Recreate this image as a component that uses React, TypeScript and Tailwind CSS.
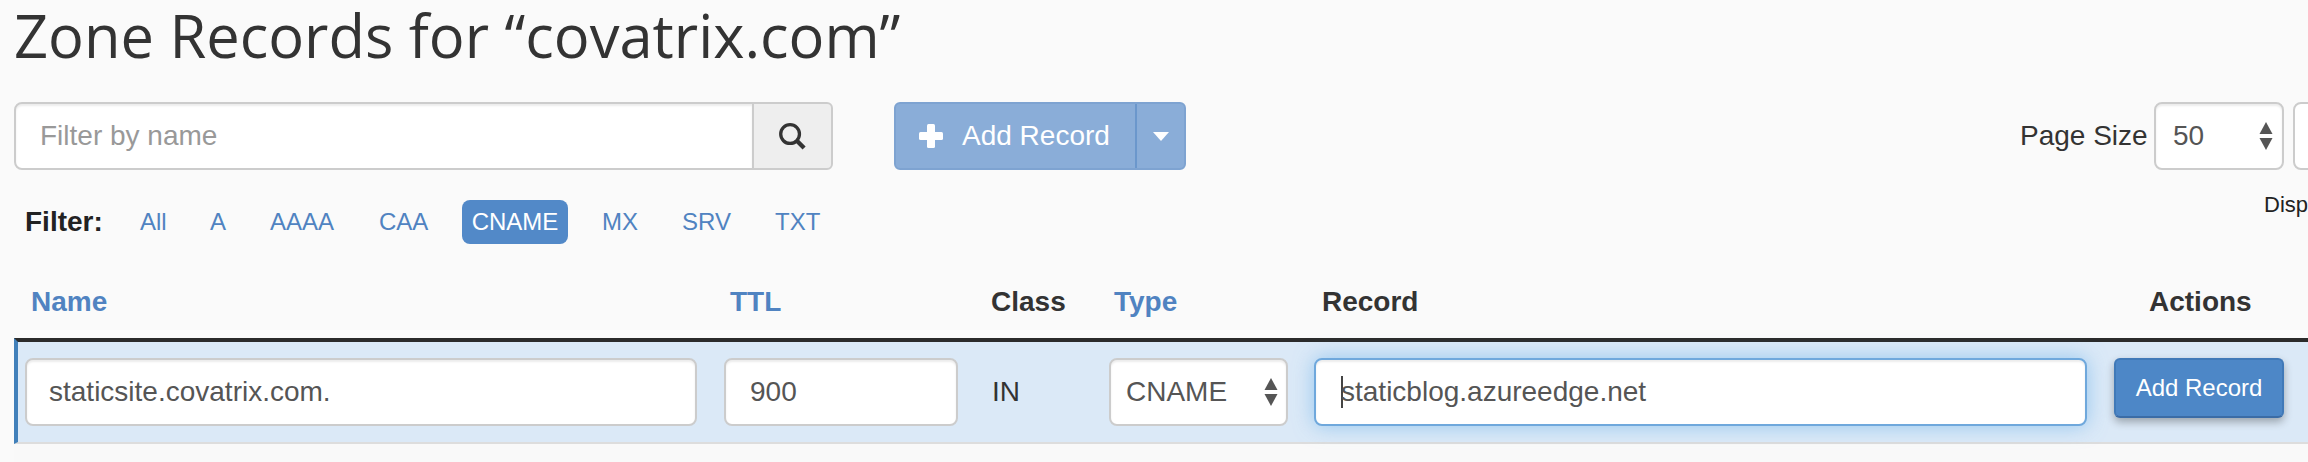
import React from "react";

function UpDown() {
  return (
    <svg width="14" height="28" viewBox="0 0 14 28" className="shrink-0" fill="#555">
      <path d="M7 0 L13.5 12 L0.5 12 Z" />
      <path d="M7 28 L13.5 16 L0.5 16 Z" />
    </svg>
  );
}

function Search() {
  return (
    <svg width="29" height="29" viewBox="0 0 30 30" fill="none" stroke="#333">
      <circle cx="12.5" cy="12.5" r="9.7" strokeWidth="3.4" />
      <path d="M19.5 19.5 L27 27" strokeWidth="4.4" />
    </svg>
  );
}

function Plus() {
  return (
    <svg width="26" height="26" viewBox="0 0 26 26" fill="#fff">
      <rect x="9" y="1" width="8" height="24" rx="1.5" />
      <rect x="1" y="9" width="24" height="8" rx="1.5" />
    </svg>
  );
}

const inputCls =
  "h-[68px] rounded-[8px] border-2 border-[#ccc] bg-white pr-[24px] text-[28px] text-[#555] shadow-[inset_0_2px_2px_rgba(0,0,0,0.075)] outline-none shrink-0";

export default function App() {
  return (
    <div className="w-[2308px] h-[462px] overflow-hidden bg-[#fafafa] text-[#333] [font-family:'Liberation_Sans',Arial,sans-serif]">
      <h1 className="pl-[14px] h-[102px] text-[59.6px] leading-[70px] font-normal whitespace-nowrap text-[#333] [font-family:'Open_Sans',sans-serif]">
        Zone Records for “covatrix.com”
      </h1>

      <div className="flex items-center pl-[14px] h-[68px] w-[2400px]">
        <div className="flex w-[819px] h-[68px] shrink-0">
          <input
            readOnly
            placeholder="Filter by name"
            className="w-[740px] h-[68px] rounded-l-[8px] border-2 border-[#ccc] bg-white px-[24px] text-[28px] text-[#555] placeholder:text-[#999] shadow-[inset_0_2px_2px_rgba(0,0,0,0.075)] outline-none"
          />
          <div className="w-[81px] h-[68px] -ml-[2px] flex items-center justify-center bg-[#eee] border-2 border-[#ccc] rounded-r-[6px]">
            <Search />
          </div>
        </div>

        <div className="flex ml-[61px] h-[68px] w-[292px] shrink-0 rounded-[6px] bg-[#8aadd8] border-2 border-[#7ea3d1] text-white text-[28px]">
          <div className="w-[241px] flex items-center pl-[22px] gap-[18px] border-r-2 border-[#6b97cc]">
            <Plus />
            <span>Add Record</span>
          </div>
          <div className="flex-1 flex items-center justify-center">
            <svg width="16" height="9" viewBox="0 0 16 9" fill="#fff">
              <path d="M0 0 H16 L8 9 Z" />
            </svg>
          </div>
        </div>

        <span className="ml-[834px] w-[134px] shrink-0 text-[28px] whitespace-nowrap">Page Size</span>
        <div className="w-[130px] h-[68px] shrink-0 rounded-[8px] border-2 border-[#ccc] bg-white shadow-[inset_0_2px_2px_rgba(0,0,0,0.075)] flex items-center justify-between pl-[17px] pr-[9px] text-[28px] text-[#555]">
          <span>50</span>
          <UpDown />
        </div>
        <div className="ml-[9px] w-[80px] h-[68px] shrink-0 rounded-[8px] border-2 border-[#ccc] bg-white" />
      </div>

      <div className="flex items-center mt-[30px] h-[44px] pl-[25px] text-[24px] w-[2308px]">
        <span className="font-bold text-[28px] w-[115px] shrink-0 text-[#222]">Filter:</span>
        <a className="text-[#5083c1] w-[70px] shrink-0">All</a>
        <a className="text-[#5083c1] w-[60px] shrink-0">A</a>
        <a className="text-[#5083c1] w-[109px] shrink-0">AAAA</a>
        <a className="text-[#5083c1] w-[83px] shrink-0">CAA</a>
        <a className="bg-[#5289c8] text-white rounded-[8px] h-[44px] w-[106px] shrink-0 flex items-center justify-center mr-[34px]">CNAME</a>
        <a className="text-[#5083c1] w-[80px] shrink-0">MX</a>
        <a className="text-[#5083c1] w-[93px] shrink-0">SRV</a>
        <a className="text-[#5083c1] w-[60px] shrink-0">TXT</a>
        <span className="ml-[1429px] self-start -mt-[8px] leading-[26px] text-[22px] whitespace-nowrap text-[#222]">Disp</span>
      </div>

      <div className="flex items-center h-[94px] ml-[14px] pt-[21px] text-[28px] font-bold">
        <a className="pl-[17px] w-[716px] shrink-0 text-[#5083c1]">Name</a>
        <a className="w-[261px] shrink-0 text-[#5083c1]">TTL</a>
        <span className="w-[123px] shrink-0">Class</span>
        <a className="w-[208px] shrink-0 text-[#5083c1]">Type</a>
        <span className="w-[827px] shrink-0">Record</span>
        <span className="shrink-0">Actions</span>
      </div>

      <div className="ml-[14px] border-t-4 border-t-[#2b2b2b] border-l-4 border-l-[#4180ba] border-b-2 border-b-[#ddd] bg-[#dbe9f7] h-[106px] flex items-start pt-[16px] pl-[7px] box-border">
        <input readOnly defaultValue="staticsite.covatrix.com." className={`${inputCls} w-[672px] pl-[22px]`} />
        <input readOnly defaultValue="900" className={`${inputCls} w-[234px] ml-[27px] pl-[24px]`} />
        <span className="w-[151px] shrink-0 pl-[34px] h-[68px] flex items-center text-[28px] text-[#333]">IN</span>
        <div className="w-[179px] h-[68px] shrink-0 rounded-[8px] border-2 border-[#ccc] bg-white shadow-[inset_0_2px_2px_rgba(0,0,0,0.075)] flex items-center justify-between pl-[15px] pr-[8px] text-[28px] text-[#555]">
          <span>CNAME</span>
          <UpDown />
        </div>
        <div className="ml-[26px] w-[773px] h-[68px] shrink-0 rounded-[8px] border-2 border-[#6fa8dc] bg-white shadow-[inset_0_2px_2px_rgba(0,0,0,0.075),0_0_20px_rgba(102,175,233,0.6)] flex items-center pl-[25px] text-[28px] text-[#555]">
          <span className="border-l-2 border-[#444] h-[32px] -mr-[2px]" />
          <span>staticblog.azureedge.net</span>
        </div>
        <button className="ml-[27px] w-[170px] h-[60px] shrink-0 rounded-[6px] bg-[#4d87c7] border-2 border-[#4079b8] border-b-[#3b6ca6] text-white text-[24px] shadow-[0_4px_8px_rgba(0,0,0,0.3)]">
          Add Record
        </button>
      </div>
      <div className="ml-[14px] h-[18px] bg-[#f9f9f9]" />
    </div>
  );
}
